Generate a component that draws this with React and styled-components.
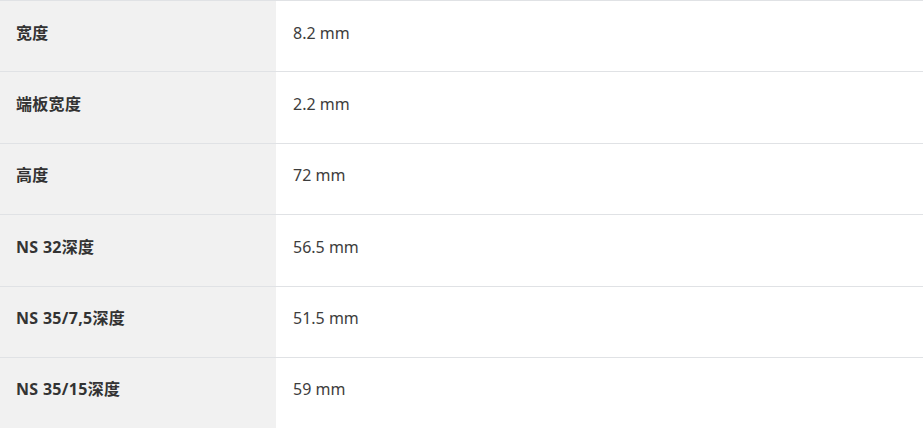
import React from "react";
import styled, { createGlobalStyle } from "styled-components";

const Global = createGlobalStyle`
  html, body { margin: 0; padding: 0; background: #ffffff; }
  body { font-family: "Noto Sans", "Noto Sans CJK SC", sans-serif; }
`;

const Table = styled.div`
  display: grid;
  grid-template-columns: 276px 1fr;
  width: 923px;
`;

const Cell = styled.div`
  box-sizing: border-box;
  height: 71.4px;
  border-top: 1px solid #e0e2e5;
  padding: 19.5px 16px 0 ${(p) => (p.$label ? "16px" : "17px")};
  background: ${(p) => (p.$label ? "#f1f1f1" : "#ffffff")};
  color: ${(p) => (p.$label ? "#333333" : "#3d3d3d")};
  font-family: "Noto Sans", "Noto Sans CJK SC", sans-serif;
  font-size: 16px;
  line-height: 24px;
  font-weight: ${(p) => (p.$label ? 700 : 400)};
  letter-spacing: ${(p) => (p.$label ? "0.3px" : "0")};
  white-space: nowrap;
`;

const rows = [
  ["宽度", "8.2 mm"],
  ["端板宽度", "2.2 mm"],
  ["高度", "72 mm"],
  ["NS 32深度", "56.5 mm"],
  ["NS 35/7,5深度", "51.5 mm"],
  ["NS 35/15深度", "59 mm"],
];

export default function App() {
  return (
    <>
      <Global />
      <Table>
        {rows.map(([k, v]) => (
          <React.Fragment key={k}>
            <Cell $label>{k}</Cell>
            <Cell>{v}</Cell>
          </React.Fragment>
        ))}
      </Table>
    </>
  );
}
